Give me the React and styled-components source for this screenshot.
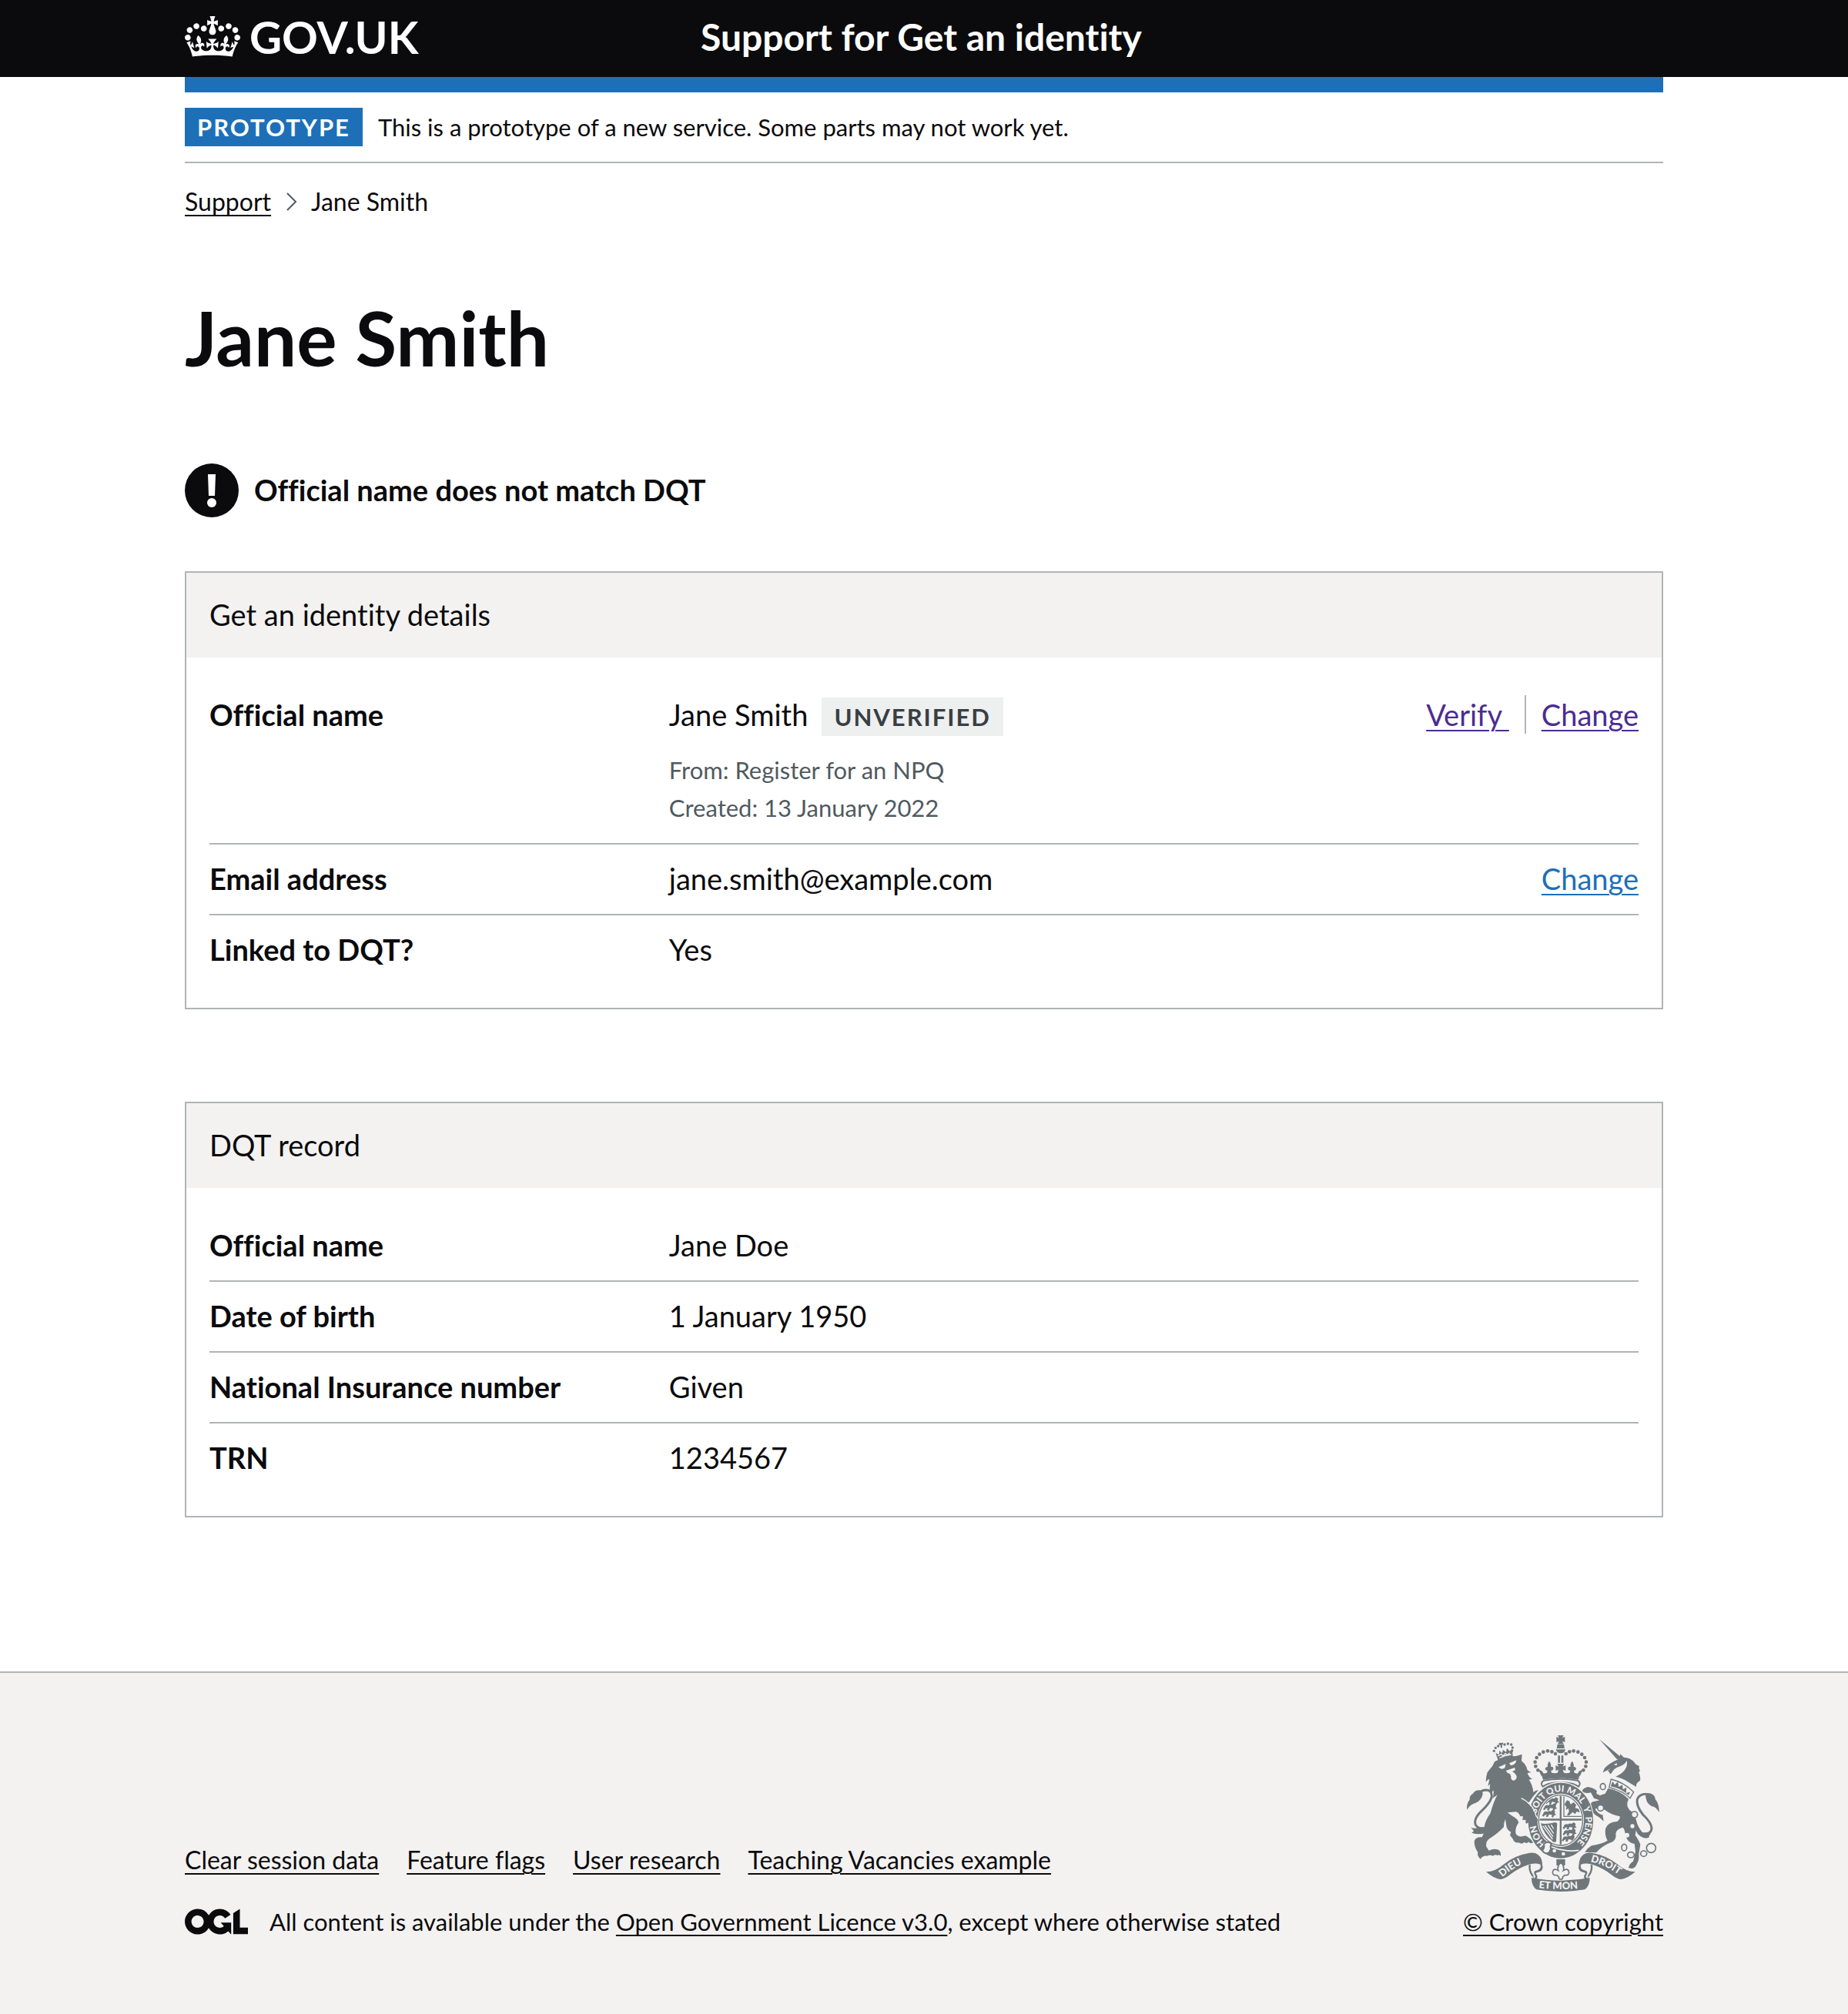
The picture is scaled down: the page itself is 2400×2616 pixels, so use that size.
import React from "react";
import styled, { createGlobalStyle, ThemeProvider } from "styled-components";

const theme = {
  black: "#0b0b0d",
  white: "#ffffff",
  blue: "#1d70b8",
  visited: "#4c2c92",
  border: "#b1b4b6",
  shade: "#f3f2f1",
  secondary: "#505a5f",
  crest: "#6f777b",
  small: "31px",
  nav: "32px",
  body: "38px",
  large: "48px",
  xlarge: "98px",
};

const GlobalStyle = createGlobalStyle`
  *, *::before, *::after { box-sizing: border-box; }
  body {
    margin: 0;
    background: ${theme.white};
    color: ${theme.black};
    font-family: Lato, "Liberation Sans", Arial, sans-serif;
    font-variant-ligatures: no-common-ligatures;
    -webkit-font-smoothing: antialiased;
  }
  h1, h2, p, dl, dd, ul, ol { margin: 0; padding: 0; }
  ul, ol { list-style: none; }
`;

const Container = styled.div`
  max-width: 1980px;
  margin: 0 auto;
  padding: 0 30px;
`;

const Link = styled.a`
  color: ${({ theme, $tone = "black" }) => theme[$tone]};
  text-decoration: underline;
  text-decoration-thickness: 2px;
  text-underline-offset: 5px;
`;

/* Header */

const Header = styled.header`
  background: ${({ theme }) => theme.black};
`;

const HeaderRow = styled.div`
  display: grid;
  grid-template-columns: 33.3333% 1fr;
  column-gap: 30px;
  align-items: center;
  height: 100px;
  padding-bottom: 5px;
`;

const HeaderLink = styled.a`
  display: flex;
  align-items: center;
  gap: 12px;
  color: ${({ theme }) => theme.white};
  font-size: ${({ $logo, theme }) => ($logo ? "58px" : theme.large)};
  font-weight: 700;
  line-height: 60px;
  text-decoration: none;
`;

const HeaderBar = styled.div`
  height: 20px;
  background: ${({ theme }) => theme.blue};
`;

/* Phase banner and breadcrumbs */

const Tag = styled.strong`
  display: inline-block;
  flex: none;
  padding: 0 16px;
  background: ${({ $grey, theme }) => ($grey ? "#eeefef" : theme.blue)};
  color: ${({ $grey, theme }) => ($grey ? "#383f43" : theme.white)};
  font-size: ${({ theme }) => theme.small};
  font-weight: 700;
  line-height: 50px;
  letter-spacing: 2px;
  text-transform: uppercase;
`;

const PhaseBanner = styled.div`
  display: flex;
  align-items: center;
  gap: 20px;
  padding: 20px 0;
  border-bottom: 2px solid ${({ theme }) => theme.border};
  font-size: ${({ theme }) => theme.small};
  line-height: 50px;
`;

const Breadcrumbs = styled.ol`
  display: flex;
  align-items: center;
  margin: 30px 0 20px;
  font-size: ${({ theme }) => theme.nav};
  line-height: 40px;
`;

const Crumb = styled.li`
  display: flex;
  align-items: center;
`;

const Chevron = styled.svg`
  width: 14px;
  height: 24px;
  margin: 0 18px 0 20px;
  fill: none;
  stroke: ${({ theme }) => theme.secondary};
  stroke-width: 2;
`;

/* Main content */

const Main = styled.main`
  padding: 86px 0 200px;
`;

const Heading = styled.h1`
  margin-bottom: 114px;
  font-size: ${({ theme }) => theme.xlarge};
  font-weight: 700;
  line-height: 100px;
`;

const Warning = styled.div`
  display: flex;
  gap: 20px;
  margin-bottom: 70px;
`;

const WarningIcon = styled.svg`
  flex: none;
  width: 70px;
  height: 70px;
`;

const WarningText = styled.strong`
  font-size: ${({ theme }) => theme.body};
  font-weight: 700;
  line-height: 68px;
`;

const Card = styled.section`
  border: 2px solid ${({ theme }) => theme.border};

  & + & { margin-top: 120px; }
`;

const CardTitle = styled.h2`
  padding: 29px 30px 31px;
  background: ${({ theme }) => theme.shade};
  font-size: ${({ theme }) => theme.body};
  font-weight: 400;
  line-height: 50px;
`;

const SummaryList = styled.dl`
  padding: 30px;
  font-size: ${({ theme }) => theme.body};
  line-height: 50px;
`;

const SummaryRow = styled.div`
  display: grid;
  grid-template-columns: 30% 1fr auto;
  column-gap: 40px;
  padding: 19px 0 21px;

  & + & { border-top: 2px solid ${({ theme }) => theme.border}; }
`;

const Key = styled.dt`
  font-weight: 700;
`;

const NameLine = styled.p`
  display: flex;
  align-items: baseline;
  gap: 18px;
  height: 50px;
`;

const Meta = styled.p`
  margin-top: 23px;
  color: ${({ theme }) => theme.secondary};
  font-size: ${({ theme }) => theme.small};
  line-height: 49px;
`;

const Actions = styled.ul`
  display: flex;
`;

const Action = styled.li`
  & + & {
    margin-left: 20px;
    padding-left: 20px;
    border-left: 2px solid ${({ theme }) => theme.border};
  }
`;

/* Footer */

const Footer = styled.footer`
  padding: 80px 0 100px;
  border-top: 2px solid ${({ theme }) => theme.border};
  background: ${({ theme }) => theme.shade};
  font-size: ${({ theme }) => theme.small};
  line-height: 40px;
`;

const FooterRow = styled.div`
  display: flex;
  align-items: flex-end;
  justify-content: space-between;
  gap: 30px;
`;

const FooterLinks = styled.ul`
  display: flex;
  flex-wrap: wrap;
  gap: 36px;
  margin-bottom: 40px;
  font-size: ${({ theme }) => theme.nav};
`;

const Licence = styled.div`
  display: flex;
  align-items: center;
  gap: 28px;
`;

const LicenceLogo = styled.svg`
  flex: none;
  width: 82px;
  height: 34px;
  fill: currentColor;
`;

const Copyright = styled.a`
  display: flex;
  flex: none;
  flex-direction: column;
  align-items: center;
  gap: 19px;
  color: ${({ theme }) => theme.black};
  text-decoration: underline;
  text-decoration-thickness: 2px;
  text-underline-offset: 5px;
`;

const CrestSvg = styled.svg`
  width: 250px;
  height: 204px;
  font-family: Lato, sans-serif;
  font-weight: 900;
`;

function CrownLogo() {
  return (
    <svg width="72" height="53" viewBox="0 0 132 97" fill="currentColor" aria-hidden="true">
      <path
        fillRule="evenodd"
        d="M25 30.2c3.5 1.5 7.7-.2 9.1-3.7 1.5-3.6-.2-7.8-3.9-9.2-3.6-1.4-7.6.3-9.1 3.9-1.4 3.5.3 7.5 3.9 9zM9 39.5c3.6 1.5 7.8-.2 9.2-3.7 1.5-3.6-.2-7.8-3.9-9.1-3.6-1.5-7.6.2-9.1 3.8-1.4 3.5.3 7.5 3.8 9zM4.4 57.2c3.5 1.5 7.7-.2 9.1-3.8 1.5-3.6-.2-7.7-3.9-9.1-3.5-1.5-7.6.3-9.1 3.8-1.4 3.5.3 7.6 3.9 9.1zm38.3-21.4c3.5 1.5 7.7-.2 9.1-3.8 1.5-3.6-.2-7.7-3.9-9.1-3.6-1.5-7.6.3-9.1 3.8-1.3 3.6.4 7.7 3.9 9.1zm64.4-5.6c-3.6 1.5-7.8-.2-9.1-3.7-1.5-3.6.2-7.8 3.8-9.2 3.6-1.4 7.7.3 9.2 3.9 1.3 3.5-.4 7.5-3.9 9zm15.9 9.3c-3.6 1.5-7.7-.2-9.1-3.7-1.5-3.6.2-7.8 3.7-9.1 3.6-1.5 7.7.2 9.2 3.8 1.5 3.5-.3 7.5-3.8 9zm4.7 17.7c-3.6 1.5-7.8-.2-9.2-3.8-1.5-3.6.2-7.7 3.9-9.1 3.6-1.5 7.7.3 9.2 3.8 1.3 3.5-.4 7.6-3.9 9.1zM89.3 35.8c-3.6 1.5-7.8-.2-9.2-3.8-1.4-3.6.2-7.7 3.9-9.1 3.6-1.5 7.7.3 9.2 3.8 1.4 3.6-.3 7.7-3.9 9.1zM69.7 17.7l8.9 4.7V9.3l-8.9 2.8c-.2-.3-.5-.6-.9-.9L72.4 0H59.6l3.5 11.2c-.3.3-.6.5-.9.9l-8.8-2.8v13.1l8.8-4.7c.3.3.6.7.9.9l-5 15.4v.1c-.2.8-.4 1.6-.4 2.4 0 4.1 3.1 7.5 7 8.1h.2c.3 0 .7.1 1 .1.4 0 .7 0 1-.1h.2c4-.6 7.1-4.1 7.1-8.1 0-.8-.1-1.7-.4-2.4V34l-5.1-15.4c.4-.2.7-.6 1-.9zM66 92.8c16.9 0 32.8 1.1 47.1 3.2 4-16.9 8.9-26.7 14-33.5l-9.6-3.4c1 4.9 1.1 7.2 0 10.2-1.5-1.4-3-4.3-4.2-8.7L108.6 76c2.8-2 5-3.2 7.5-3.3-4.4 9.4-10 11.9-13.6 11.2-4.3-.8-6.3-4.6-5.6-7.9 1-4.7 5.7-5.9 8-.5 4.3-8.7-3-11.4-7.6-8.8 7.1-7.2 7.9-13.5 2.1-21.1-8 6.1-8.1 12.3-4.5 20.8-4.7-5.4-12.1-2.5-9.5 6.2 3.4-5.2 7.9-2 7.2 3.1-.6 4.3-6.4 7.8-13.5 7.2-10.3-.9-10.9-8-11.2-13.8 2.5-.5 7.1 1.8 11 7.3L80.2 60c-4.1 4.4-8 5.3-12.3 5.4 1.4-4.4 8-11.6 8-11.6H55.5s6.4 7.2 7.9 11.6c-4.2-.1-8-1-12.3-5.4l1.4 16.4c3.9-5.5 8.5-7.7 10.9-7.3-.3 5.8-.9 12.8-11.1 13.8-7.2.6-12.9-2.9-13.5-7.2-.7-5 3.8-8.3 7.1-3.1 2.7-8.7-4.6-11.6-9.4-6.2 3.7-8.5 3.6-14.7-4.6-20.8-5.8 7.6-5 13.9 2.2 21.1-4.7-2.6-11.9.1-7.7 8.8 2.3-5.5 7.1-4.2 8.1.5.7 3.3-1.3 7.1-5.7 7.9-3.5.7-9-1.8-13.5-11.2 2.5.1 4.7 1.3 7.5 3.3l-4.7-15.4c-1.2 4.4-2.7 7.2-4.3 8.7-1.1-3-.9-5.3 0-10.2l-9.5 3.4c5 6.9 9.9 16.7 14 33.5 14.8-2.1 30.8-3.2 47.7-3.2z"
      />
    </svg>
  );
}

/* One half of the symmetrical parts: crown arch and ribbon */
function CrestHalf() {
  return (
    <>
      {[[340, 190], [338, 173], [344, 156], [355, 143], [370, 134], [387, 130], [403, 133], [417, 141], [349, 205]].map(([x, y]) => (
        <circle key={x} cx={x} cy={y} r="7" />
      ))}
      <path d="M393 170q9 11 6 22 10-3 10 8-2 8-9 6l2 10h-18l2-10q-8 1-9-6 1-10 10-8-3-11 6-22z" />
      <path d="M352 205q12-2 16 8l6 10-12 4z" />
      <path d="M147 601q36 0 70-30 42-34 96-43 22-4 36 6 18 14 17 42l-8-4q-22-8-46 1-40 14-72 39-22 18-40 18-24-4-53-29z" />
      <path d="M313 574q-2 34 20 52l-2-12q-14-18-10-40zM366 572q8 26-20 32-8 1-2 8 8 12-6 22l-10-6q16-4 9-14-10-16 9-19 16-4 13-22z" />
    </>
  );
}

const PASSANT = "M0 6q8-6 14-2 6-6 14-2l8-6 8 6-2 8 6 6-8 2-4 8-6-2 2-8-12-2-4 10-8-1 3-8-8 2-4 6-6-4 4-6z";

function Crest() {
  return (
    <CrestSvg viewBox="72 66 750 612" fill={theme.crest} aria-hidden="true">
      <defs>
        <path id="garter" d="M437.5 513a97 112 0 0 1 0-224a97 112 0 0 1 0 224" />
        <path id="dieu" d="M210 622q48-44 108-62" />
        <path id="etmon" d="M352 664q86 10 176 0" />
        <path id="droit" d="M553 561q68 16 120 60" />
        <clipPath id="shield"><ellipse cx="437.5" cy="400" rx="82" ry="94" /></clipPath>
      </defs>

      <CrestHalf />
      <g transform="matrix(-1 0 0 1 875 0)"><CrestHalf /></g>

      {/* Crown */}
      <path d="M426 69h23l-5 10 10-4v21l-10-4 5 11h-23l5-11-10 4V75l10 4zM425 104h25l3 16h-31zM419 124h37q-2 15-18 15t-19-15zM427 148h8v28h-8zM440 148h8v28h-8zM424 180h27l-6 11 12-5v21l-11-4 4 14h-25l4-14-11 4v-21l12 5z" />
      <path d="M361 216q15 6 32-6 21 14 44-1 23 15 44 1 17 12 33 6l-8 26q-69-12-137 0z" />
      <path d="M372 245q65-12 131 0 16 10 4 24-12-8-22-11-48-12-95 0-12 4-22 11-12-14 4-24z" fill={theme.shade} stroke={theme.crest} strokeWidth="6" />

      {/* Lion */}
      <path d="M172 188l8-16 12-6q40-16 72-16l23-7-2 26q14 10 21 27-2 10 17 17l-15 3q4 16 19 23l-13 3q15 21 17 49 10-9 20-8-22 24-37 47l-12 2q20 16 24 42-3 15 14 22l5 14-12-3-4 13-8-10-9 10-1-15-10 6 2-16-14 3 4-15-12 2q-8-16-17-18l-34 3 20 14q22 12 24 25-16 22-11 44 8 12 25 10 12-6 20 1 14 8 22 22-10 8-17-2-8 10-17 1-10 10-22 2-18 2-22-13l-12-16 4-12q-16-8-18-24l-4-26q-6 12-6 30-26 28-54 44-18 12-14 33l10 15q20-9 32-4 16 4 14 25-8-8-12-2-12-6-18 2-12-6-23 0-15-3-26 12-14-12-10-26-14-20-14-42 2-18 30-17 12-18 9-40 3-24 24-54 12-44 27-71l-19 14q6-16 3-32l-9 14q-8-12-3-38l-9 8q4-15 6-28-12 5-14 14 0-24 6-40z" />
      <path d="M196 193l28-12-4 15q-14 10-24-3zM237 178l28-12q-2 20-22 20zM224 207l34-12 3 9-12 6 8 5q10 10 9 19-4 12-14 11-10-3-8-16l-4-10-9-3z" fill={theme.shade} />
      <path d="M194 168l-10-31 13 8 2-17 10 11 4-14 12 10 3-16 11 12 10-8 2 29-2 3q-28 2-55 13z" />
      <path d="M199 157q20-10 46-13M192 150l14-8 7 8 9-10 9 6 8-9" fill="none" stroke={theme.shade} strokeWidth="4" />
      {[[178, 130], [184, 118], [194, 111], [219, 105], [232, 102], [245, 105], [250, 117], [248, 129]].map(([x, y]) => (
        <circle key={x} cx={x} cy={y} r="5" />
      ))}
      <path d="M201 98l8 1 3-3 2 8-5 2 1 12h-6l-1-10-7-2 1-6z" />
      <path d="M150 430q-34 8-45-14-6-20 18-46 46-42 46-66 0-22-24-22-18 2-30 14" fill="none" stroke={theme.crest} strokeWidth="9" />
      <path d="M132 284q-28-6-36 12-14 6-13 24-12 12-11 39 14-22 35-27 22-8 27-34zM88 428q14 6 30 0l40-3-13 24q-26 9-54 0l8-7z" />

      {/* Unicorn */}
      <path d="M588 84l84 70-15 9zM602 214l6-16q18-20 50-34l10-10 2-12 14 13q30 2 44 24 4 6 16 10-4 8 3 19l-5 5q9 22 4 34-16 8-14 23l-36-22q-12-8-38-16l-6-2q30-14 39-32 8-16 4-30-8 16-26 22-26 8-33 26l-6 4-5-10-5-2 14-10z" />
      <path d="M644 183l14-5-3 9z" fill={theme.shade} />
      <path d="M634 240q50 12 88 50l-14 24q-30-30-82-42z" fill={theme.shade} stroke={theme.crest} strokeWidth="4" />
      <path d="M632 268l8-20 8 14 12-12 4 20 14-8 2 18 14-8-2 22 16-4-6 12q-32-28-70-34z" />
      <path d="M622 276q48 8 80 42-12 24 4 42 24 14 29 56l-7 42q16 22 20 38l-6 34q2 24-6 36-6 20-22 22l-12-2q2-16 18-26l9-38-4-30q-26-4-34-30-4-30-12-34-26 8-27 24 4 20-12 32-40 14-64 42l-44-2q10-16 26-25 44-8 62-20-12-20-8-46 8-26 46-28 12-10 10-20-42-10-58-26l-36-5-1 6q20 22 28 18l4 26-18-16q-28-12-34-42 0-20 18-20l18-4-22-8-12-22q-20 6-34-4 0-12 22-18 22 4 34 14l12 20 22-8z" />
      <path d="M762 452q30 2 30-22-2-22-34-52-28-36-22-60 8-20 34-20" fill="none" stroke={theme.crest} strokeWidth="9" />
      <path d="M768 294q28-2 36 14 0 8 8 18 10 18 9 43-12-22-30-24-24-12-23-51zM731 400q8 28 24 46 18 8 34 6l-8 10q8 4-10 8-30-4-40-30z" />
      <g fill={theme.shade} stroke={theme.crest} strokeWidth="5">
        <ellipse cx="602" cy="269" rx="10" ry="12" />
        <circle cx="593" cy="352" r="12" />
        <circle cx="725" cy="378" r="12" />
        <ellipse cx="685" cy="506" rx="10" ry="13" />
        <ellipse cx="711" cy="535" rx="13" ry="11" />
        <ellipse cx="761" cy="530" rx="12" ry="11" />
        <circle cx="790" cy="508" r="18" />
      </g>
      <g fill={theme.shade}>
        <circle cx="717" cy="423" r="8" />
        <circle cx="696" cy="458" r="9" />
        <circle cx="584" cy="293" r="7" />
      </g>

      {/* Garter and shield */}
      <ellipse cx="437.5" cy="400" rx="130" ry="150" fill={theme.shade} />
      <ellipse cx="437.5" cy="401" rx="127" ry="147" />
      <ellipse cx="437.5" cy="400" rx="91" ry="104" fill={theme.shade} />
      <ellipse cx="437.5" cy="400" rx="86" ry="98" fill="none" stroke={theme.crest} strokeWidth="4" />
      <g clipPath="url(#shield)">
        <path d="M434 300h7v200h-7zM350 394h176v7H350z" />
        <path d="M450 300v85h76" fill="none" stroke={theme.crest} strokeWidth="4" />
        {[[384, 314], [376, 338], [372, 363], [452, 412], [452, 436], [448, 460]].map(([x, y]) => (
          <path key={y} d={PASSANT} transform={`translate(${x} ${y})`} />
        ))}
        <path d="M462 322l10 4 4 12 12-8 10 10-4 12 14 4 4 14-12-4-6 10-10-8-14 14-8-2 8-14-2-12-10 6 2-12-8-10z" />
        <path d="M360 412q20 6 56-4l8 4-4 70q-10 8-16-2-30-20-44-68z" />
        <path d="M376 420l32 44M388 419l22 32M400 417l10 16M368 422l38 52" stroke={theme.shade} strokeWidth="4" />
      </g>
      <g fill={theme.shade} fontSize="35" textAnchor="middle">
        <text><textPath href="#garter" startOffset="16%">HON</textPath></text>
        <text><textPath href="#garter" startOffset="35%">SOIT</textPath></text>
        <text><textPath href="#garter" startOffset="47%">QUI</textPath></text>
        <text><textPath href="#garter" startOffset="59%">MAL</textPath></text>
        <text><textPath href="#garter" startOffset="69%">Y</textPath></text>
        <text><textPath href="#garter" startOffset="81%">PENSE</textPath></text>
      </g>
      <path d="M400 503q54 22 108 14" fill="none" stroke={theme.shade} strokeWidth="5" />
      <path d="M372 492q22-16 30 4-8 6-2 14l-8 16q-16 8-26-8 10-10 6-26z" fill={theme.shade} stroke={theme.crest} strokeWidth="6" />
      <circle cx="413" cy="519" r="7" fill={theme.shade} />
      <circle cx="448" cy="531" r="7" fill={theme.shade} />

      {/* Lion's forepaw, resting on the garter */}
      <path d="M284 316q36 18 50 54 0 14 14 26l-3 14-9-4-2 16-10-10-7 10-4-14-10 6-2-16-12 2 2-14-14-8z" />
      <path d="M284 314q38 18 54 54 0 14 13 26" fill="none" stroke={theme.shade} strokeWidth="4" />

      {/* Pendant and motto */}
      <path d="M421 552h34v24h-34z" />
      <path d="M438 564q16 16 10 32 18-12 22 6 0 14-16 12l-8 6q0 10-8 10t-8-10l-8-6q-16 2-16-12 4-18 22-6-6-16 10-32z" fill={theme.shade} stroke={theme.crest} strokeWidth="5" />
      <path d="M324 624q112 22 227 0 0 34-20 46-94 16-188 0-20-16-19-46z" />
      <g fill={theme.shade} fontSize="39">
        <text><textPath href="#dieu">DIEU</textPath></text>
        <text><textPath href="#etmon">ET MON</textPath></text>
        <text><textPath href="#droit">DROIT</textPath></text>
      </g>
    </CrestSvg>
  );
}

function Summary({ title, rows }) {
  return (
    <Card>
      <CardTitle>{title}</CardTitle>
      <SummaryList>
        {rows.map(({ label, value, actions }) => (
          <SummaryRow key={label}>
            <Key>{label}</Key>
            <dd>{value}</dd>
            {actions && (
              <dd>
                <Actions>
                  {actions.map(([text, tone]) => (
                    <Action key={text}>
                      <Link href="#" $tone={tone}>{text}</Link>
                    </Action>
                  ))}
                </Actions>
              </dd>
            )}
          </SummaryRow>
        ))}
      </SummaryList>
    </Card>
  );
}

const identityRows = [
  {
    label: "Official name",
    value: (
      <>
        <NameLine>
          Jane Smith <Tag $grey>Unverified</Tag>
        </NameLine>
        <Meta>
          From: Register for an NPQ
          <br />
          Created: 13 January 2022
        </Meta>
      </>
    ),
    actions: [["Verify\u00a0", "visited"], ["Change", "visited"]],
  },
  { label: "Email address", value: "jane.smith@example.com", actions: [["Change", "blue"]] },
  { label: "Linked to DQT?", value: "Yes" },
];

const recordRows = [
  { label: "Official name", value: "Jane Doe" },
  { label: "Date of birth", value: "1 January 1950" },
  { label: "National Insurance number", value: "Given" },
  { label: "TRN", value: "1234567" },
];

const footerLinks = ["Clear session data", "Feature flags", "User research", "Teaching Vacancies example"];

export default function App() {
  return (
    <ThemeProvider theme={theme}>
      <GlobalStyle />
      <Header>
        <Container>
          <HeaderRow>
            <HeaderLink href="#" $logo>
              <CrownLogo />
              GOV.UK
            </HeaderLink>
            <HeaderLink href="#">Support for Get an identity</HeaderLink>
          </HeaderRow>
        </Container>
      </Header>
      <Container>
        <HeaderBar />
        <PhaseBanner>
          <Tag>Prototype</Tag>
          <span>This is a prototype of a new service. Some parts may not work yet.</span>
        </PhaseBanner>
        <nav aria-label="Breadcrumb">
          <Breadcrumbs>
            <Crumb><Link href="#">Support</Link></Crumb>
            <Crumb>
              <Chevron viewBox="0 0 14 24" aria-hidden="true">
                <path d="M1 1l11 11L1 23" />
              </Chevron>
              Jane Smith
            </Crumb>
          </Breadcrumbs>
        </nav>
        <Main>
          <Heading>Jane Smith</Heading>
          <Warning>
            <WarningIcon viewBox="0 0 70 70" aria-hidden="true">
              <circle cx="35" cy="35" r="35" fill={theme.black} />
              <path d="M30 14h10l-1 28h-8z" fill={theme.white} />
              <circle cx="35" cy="51" r="6" fill={theme.white} />
            </WarningIcon>
            <WarningText>Official name does not match DQT</WarningText>
          </Warning>
          <Summary title="Get an identity details" rows={identityRows} />
          <Summary title="DQT record" rows={recordRows} />
        </Main>
      </Container>
      <Footer>
        <Container>
          <FooterRow>
            <div>
              <FooterLinks>
                {footerLinks.map((text) => (
                  <li key={text}><Link href="#">{text}</Link></li>
                ))}
              </FooterLinks>
              <Licence>
                <LicenceLogo viewBox="0 0 483.2 195.7" aria-hidden="true">
                  <path d="M421.5 142.8V.1l-50.7 32.3v161.1h112.4v-50.7zm-122.3-9.6A47.12 47.12 0 0 1 221 97.8c0-26 21.1-47.1 47.1-47.1 16.7 0 31.4 8.7 39.7 21.8l42.7-27.2A97.63 97.63 0 0 0 268.1 0c-36.5 0-68.3 20.1-85.1 49.7A98 98 0 0 0 97.8 0C43.9 0 0 43.9 0 97.8s43.9 97.8 97.8 97.8c36.5 0 68.3-20.1 85.1-49.7a97.76 97.76 0 0 0 149.6 25.4l19.4 22.2h3v-87.8h-80l24.3 27.5zM97.8 145c-26 0-47.1-21.1-47.1-47.1s21.1-47.1 47.1-47.1 47.1 21.1 47.1 47.1S123.8 145 97.8 145" />
                </LicenceLogo>
                <span>
                  All content is available under the <Link href="#">Open Government Licence v3.0</Link>, except where
                  otherwise stated
                </span>
              </Licence>
            </div>
            <Copyright href="#">
              <Crest />
              <span>© Crown copyright</span>
            </Copyright>
          </FooterRow>
        </Container>
      </Footer>
    </ThemeProvider>
  );
}
